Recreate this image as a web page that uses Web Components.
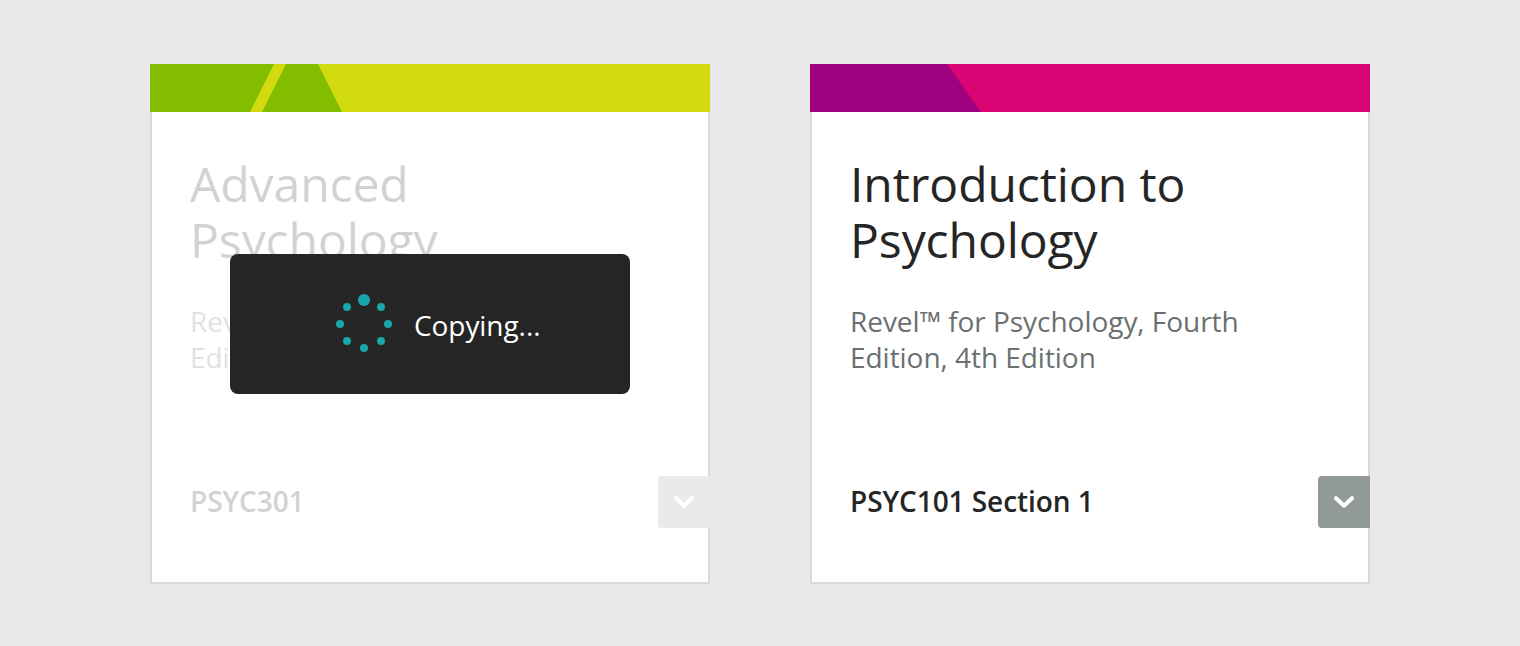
<!DOCTYPE html>
<html lang="en">
<head>
<meta charset="utf-8">
<title>Courses</title>
<style>
body{margin:0;background:#e9e9e9;font-family:"Open Sans",sans-serif;color:#252525;-webkit-font-smoothing:antialiased}
</style>
</head>
<body>
<course-list>
  <course-card busy>
    <svg slot="banner" width="560" height="48" viewBox="0 0 560 48"><path fill="#d2db0e" d="M0 0h560v48H0z"/><path fill="#84bd00" d="M0 0h124l-24 48H0zM136 0h32l24 48h-80z"/></svg>
    <span slot="title">Advanced<br>Psychology</span>
    <span slot="product">Revel™ for Psychology, Fourth Edition, 4th Edition</span>
    <span slot="code">PSYC301</span>
    <busy-notice slot="notice">Copying...</busy-notice>
  </course-card>
  <course-card>
    <svg slot="banner" width="560" height="48" viewBox="0 0 560 48"><path fill="#db0474" d="M0 0h560v48H0z"/><path fill="#9e007e" d="M0 0h137l34 48H0z"/></svg>
    <span slot="title">Introduction to Psychology</span>
    <span slot="product">Revel™ for Psychology, Fourth Edition, 4th Edition</span>
    <span slot="code">PSYC101 Section 1</span>
  </course-card>
</course-list>
<script>
class CourseList extends HTMLElement{
  constructor(){super();this.attachShadow({mode:'open'}).innerHTML=`<style>
  :host{display:flex;justify-content:center;gap:100px;padding:64px 0 62px;box-sizing:border-box;height:646px}
  </style><slot></slot>`;}
}
class MenuButton extends HTMLElement{
  constructor(){super();this.attachShadow({mode:'open'}).innerHTML=`<style>
  :host{display:block;width:52px;height:52px}
  button{display:grid;place-items:center;width:100%;height:100%;padding:0;border:0;border-radius:4px 0 0 4px;background:var(--menu-color,#919a98)}
  </style><button aria-label="Course menu"><svg width="24" height="16" viewBox="0 0 24 16"><path d="M4 4.2l8 7.6 8-7.6" fill="none" stroke="#fff" stroke-width="4" stroke-linecap="round" stroke-linejoin="round"/></svg></button>`;}
}
class BusyNotice extends HTMLElement{
  constructor(){super();
  const dots=[[28,8,6],[45,15,4],[52,32,4],[45,49,4],[28,56,4],[11,49,4],[4,32,4],[11,15,4]].map(([x,y,r])=>`<circle cx="${x}" cy="${y}" r="${r}"/>`).join('');
  this.attachShadow({mode:'open'}).innerHTML=`<style>
  :host{display:flex;width:400px;height:140px;box-sizing:border-box;padding:38px 0 0 106px;border-radius:8px;background:#252525;color:#fff;font-size:28px;line-height:36px;letter-spacing:-.07px}
  svg{fill:#19a6a8;flex:none}
  span{margin:15px 0 0 22px;white-space:nowrap}
  </style><svg width="56" height="64">${dots}</svg><span><slot></slot></span>`;}
}
class CourseCard extends HTMLElement{
  constructor(){super();this.attachShadow({mode:'open'}).innerHTML=`<style>
  :host{display:flex;flex-direction:column;position:relative;width:560px;height:520px}
  .banner{height:48px;display:flex}
  .body{flex:1;box-sizing:border-box;background:#fff;border:2px solid #d9d9d9;border-top:0;padding:44px 0 0 38px;display:flex;flex-direction:column}
  h2{margin:0;width:440px;font-size:48px;line-height:56px;font-weight:400;letter-spacing:-.06px}
  p{margin:35px 0 0;width:440px;font-size:28px;line-height:36px;color:#6a7070;letter-spacing:-.04px}
  footer{display:flex;justify-content:space-between;align-items:center;margin:101px -2px 0 0;font-size:28px;line-height:36px;font-weight:600;letter-spacing:-.06px}
  .code{padding-bottom:2px}
  :host([busy]) :is(h2,p,.code){opacity:.2}
  :host([busy]) menu-button{--menu-color:#e9ebea}
  .notice{position:absolute;left:80px;top:190px}
  </style>
  <div class="banner"><slot name="banner"></slot></div>
  <div class="body"><h2><slot name="title"></slot></h2><p><slot name="product"></slot></p>
  <footer><span class="code"><slot name="code"></slot></span><menu-button></menu-button></footer></div>
  <div class="notice"><slot name="notice"></slot></div>`;}
}
customElements.define('course-list',CourseList);
customElements.define('menu-button',MenuButton);
customElements.define('busy-notice',BusyNotice);
customElements.define('course-card',CourseCard);
</script>
</body>
</html>
